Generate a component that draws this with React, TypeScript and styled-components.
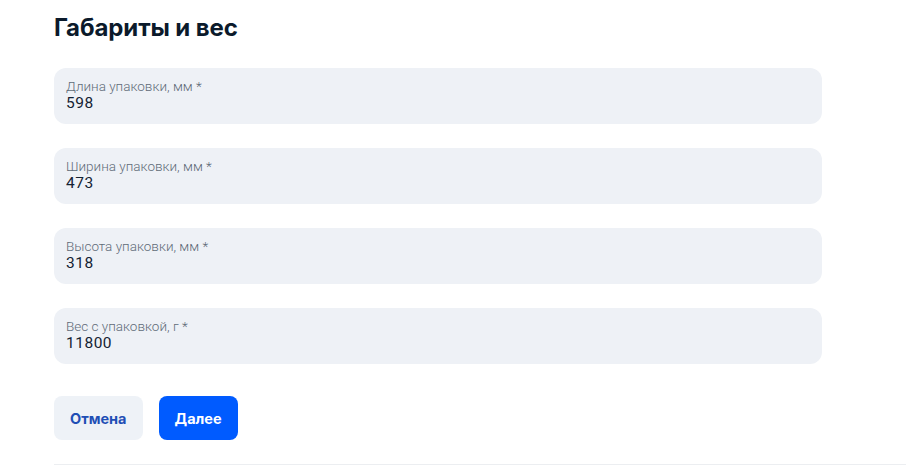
import React from "react";
import styled, { createGlobalStyle } from "styled-components";

const Global = createGlobalStyle`
  html, body { margin: 0; padding: 0; background: #fff; }
  body { font-family: Roboto, "Noto Sans", sans-serif; }
`;

const Page = styled.div`
  width: 906px;
  height: 466px;
  box-sizing: border-box;
  padding: 13px 0 0 54px;
  overflow: hidden;
`;

const Title = styled.h2`
  margin: 0;
  font-family: Inter, Roboto, sans-serif;
  font-size: 24px;
  line-height: 30px;
  font-weight: 700;
  color: #0b1a2b;
  letter-spacing: -0.1px;
`;

const Fields = styled.div`
  display: flex;
  flex-direction: column;
  gap: 24px;
  margin-top: 25px;
  width: 768px;
`;

const Field = styled.div`
  height: 56px;
  box-sizing: border-box;
  border-radius: 12px;
  background: #eef1f6;
  padding: 10px 12px 0;
  display: flex;
  flex-direction: column;
`;

const Label = styled.span`
  font-size: 13.5px;
  line-height: 16px;
  color: #5f6b78;
  font-weight: 300;
`;

const Value = styled.span`
  font-size: 15.5px;
  line-height: 19px;
  color: #142233;
  letter-spacing: 0.5px;
`;

const Actions = styled.div`
  display: flex;
  gap: 16px;
  margin-top: 32px;
`;

const Button = styled.button<{ $primary?: boolean }>`
  height: 44px;
  border: none;
  border-radius: 8px;
  padding: 0 16px;
  font-family: Inter, Roboto, sans-serif;
  font-size: 14.5px;
  font-weight: 700;
  background: ${(p) => (p.$primary ? "#005bff" : "#eef2f7")};
  color: ${(p) => (p.$primary ? "#ffffff" : "#1f4fb5")};
  cursor: pointer;
`;

const Divider = styled.div`
  margin-top: 24px;
  height: 1px;
  background: #eceef1;
  width: 852px;
`;

const fields = [
  { label: "Длина упаковки, мм *", value: "598" },
  { label: "Ширина упаковки, мм *", value: "473" },
  { label: "Высота упаковки, мм *", value: "318" },
  { label: "Вес с упаковкой, г *", value: "11800" },
];

export default function App() {
  return (
    <>
      <Global />
      <Page>
        <Title>Габариты и вес</Title>
        <Fields>
          {fields.map((f) => (
            <Field key={f.label}>
              <Label>{f.label}</Label>
              <Value>{f.value}</Value>
            </Field>
          ))}
        </Fields>
        <Actions>
          <Button>Отмена</Button>
          <Button $primary>Далее</Button>
        </Actions>
        <Divider />
      </Page>
    </>
  );
}
